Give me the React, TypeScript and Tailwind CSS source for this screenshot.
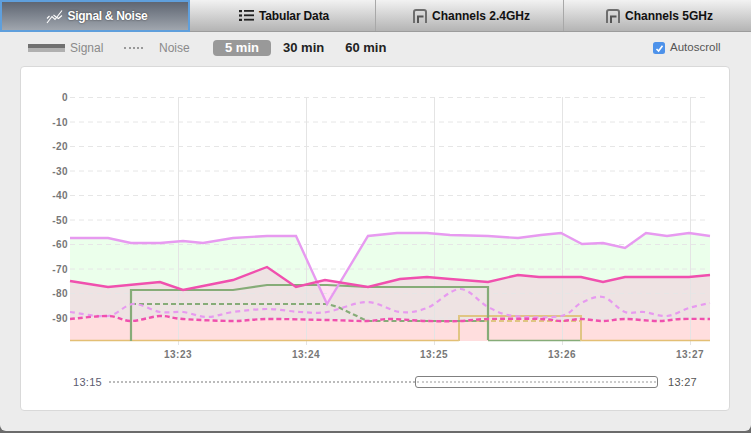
import React from "react";

type P = [number, number];
const poly = (p: P[]) => p.map((q, i) => `${i ? "L" : "M"}${q[0]} ${q[1]}`).join(" ");
const smooth = (p: P[]) => {
  let d = `M${p[0][0]} ${p[0][1]}`;
  for (let i = 0; i < p.length - 1; i++) {
    const a = p[Math.max(i - 1, 0)], b = p[i], c = p[i + 1], e = p[Math.min(i + 2, p.length - 1)];
    d += ` C${b[0] + (c[0] - a[0]) / 6} ${b[1] + (c[1] - a[1]) / 6} ${c[0] - (e[0] - b[0]) / 6} ${c[1] - (e[1] - b[1]) / 6} ${c[0]} ${c[1]}`;
  }
  return d;
};

const purple: P[] = [[70,238],[108,238],[131,243],[160,243],[183,241],[203,243],[233,238],[267,236],[296,236],[327,304],[368,236],[397,233],[427,233],[450,235],[488,236],[518,238],[541,235],[561,233],[582,244],[603,243],[625,248],[646,233],[667,236],[689,233],[710,236]];
const pink: P[] = [[70,281],[108,287],[160,282],[183,290],[233,280],[267,267],[296,287],[325,280],[368,287],[400,279],[427,277],[450,279],[488,282],[518,275],[539,277],[581,277],[603,282],[625,277],[689,277],[710,275]];
const noise: P[] = [[70,319],[108,316],[131,321],[160,316],[183,319],[233,321],[267,319],[327,320],[367,321],[390,319],[427,321],[460,321],[487,319],[541,319],[561,321],[581,319],[603,321],[625,319],[658,321],[681,319],[710,319]];
const purpleNoise: P[] = [[70,312],[108,316],[133,304],[160,312],[183,312],[207,317],[233,312],[267,309],[300,312],[327,312],[367,302],[400,312],[427,308],[460,289],[488,307],[514,316],[561,316],[581,303],[603,297],[625,312],[644,312],[667,316],[689,308],[710,303]];
const greenNoise: P[] = [[131,304],[327,304],[338,307],[363,319],[368,321],[487,321]];
const greenLine: P[] = [[131,341],[131,290],[233,290],[267,285],[327,285],[368,287],[488,287],[488,340]];
const ys = [0, 1, 2, 3, 4, 5, 6, 7, 8, 9];
const times: [number, string][] = [[179, "13:23"], [307, "13:24"], [435, "13:25"], [563, "13:26"], [691, "13:27"]];

function ChannelIcon() {
  return (
    <svg width="14" height="14" viewBox="0 0 14 14" fill="none">
      <path d="M1 14V3a2 2 0 0 1 2-2h8a2 2 0 0 1 2 2V14" stroke="#6e6e6e" strokeWidth="2" />
      <path d="M5 14V7.5H10.5" stroke="#555" strokeWidth="2" />
    </svg>
  );
}

function Tab({ children, last, className }: { children: React.ReactNode; last?: boolean; className?: string }) {
  return (
    <div className={`flex h-full flex-1 items-center justify-center gap-[5px] text-[12px] font-bold text-[#111] ${last ? "" : "border-r border-[#a8a8a8]"} ${className ?? ""}`}>
      {children}
    </div>
  );
}

export default function App() {
  return (
    <div className="h-[433px] w-[751px] overflow-hidden bg-[#6b6b6b] font-['Liberation_Sans',Arial,sans-serif]">
      <div className="flex h-[431px] flex-col rounded-b-[6px] bg-[#ececec]">
        <div className="flex h-[32px] w-full border-b border-[#9c9c9c] bg-gradient-to-b from-[#f2f2f2] to-[#b4b4b4]">
          <div className="flex h-[32px] w-[190px] shrink-0 items-center justify-center gap-[5px] border-2 border-[#5f9fdc] bg-gradient-to-b from-[#5f6672] to-[#a0a6ae] pl-[3px] text-[12px] font-bold tracking-[-0.3px] text-white [text-shadow:0_0_2px_#333]">
            <svg width="17" height="15" viewBox="0 0 17 15" fill="none" stroke="#fff" strokeWidth="1.1">
              <path d="M1 14L6 7.5L9 10.5L16 1.5" />
              <path d="M1 9.5L3.5 7M7.5 6L10 8L12.5 9.5L16 6.5" />
            </svg>
            <span>Signal &amp; Noise</span>
          </div>
          <div className="w-[186px]">
            <Tab className="pl-[3px] tracking-[-0.15px]">
              <svg width="15" height="11" viewBox="0 0 15 11" fill="#222">
                <rect x="0" y="0" width="3" height="2.2" />
                <rect x="0" y="4.4" width="3" height="2.2" />
                <rect x="0" y="8.8" width="3" height="2.2" />
                <rect x="5" y="0" width="10" height="1.8" />
                <rect x="5" y="4.4" width="10" height="1.8" />
                <rect x="5" y="8.8" width="10" height="1.8" />
              </svg>
              <span>Tabular Data</span>
            </Tab>
          </div>
          <div className="w-[188px]">
            <Tab className="pl-[4px]">
              <ChannelIcon />
              <span>Channels 2.4GHz</span>
            </Tab>
          </div>
          <div className="flex-1">
            <Tab last className="pl-[4px]">
              <ChannelIcon />
              <span>Channels 5GHz</span>
            </Tab>
          </div>
        </div>

        <div className="flex h-[32px] items-center pl-[28px] pr-[29px]">
          <div className="h-[8px] w-[37px] bg-gradient-to-b from-[#707070] from-50% to-[#b0b0b0] to-50%" />
          <span className="ml-[5px] w-[31px] text-[12px] text-[#8a8a8a]">Signal</span>
          <div className="ml-[23px] h-[1px] w-[19px] border-t-2 border-dotted border-[#999]" />
          <span className="ml-[16px] w-[30px] text-[12px] text-[#8a8a8a]">Noise</span>
          <div className="ml-[24px] flex h-[16px] w-[58px] items-center justify-center rounded-[4px] bg-[#999] text-[13px] font-bold text-white">5 min</div>
          <span className="ml-[12px] text-[13px] font-bold text-[#222]">30 min</span>
          <span className="ml-[21px] text-[13px] font-bold text-[#222]">60 min</span>
          <div className="ml-auto flex items-center gap-[5px]">
            <div className="flex h-[12px] w-[12px] items-center justify-center rounded-[2.5px] bg-[#4d92ea]">
              <svg width="9" height="9" viewBox="0 0 9 9" fill="none" stroke="#fff" strokeWidth="1.6">
                <path d="M1.5 5L3.6 7L7.5 1.8" />
              </svg>
            </div>
            <span className="w-[52px] text-[11.5px] text-[#555]">Autoscroll</span>
          </div>
        </div>

        <div className="ml-[20px] mt-[2px] h-[345px] w-[710px] rounded-[4px] border border-[#d9d9d9] bg-white">
          <svg width="708" height="298" viewBox="21 67 708 298" className="block" fontFamily="'Liberation Sans', Arial, sans-serif">
            <path d={`${poly(purple)} ${poly([...noise].reverse()).replace("M", "L")} Z`} fill="rgba(0,255,0,0.08)" />
            <path d={`${poly(pink)} ${poly([...noise].reverse()).replace("M", "L")} Z`} fill="rgba(248,144,204,0.25)" />
            <path d={`${poly(noise)} L710 341 L70 341 Z`} fill="#ffdede" />
            {ys.map((i) => (
              <g key={i}>
                <line x1="70" x2="705" y1={97.5 + i * 24.5} y2={97.5 + i * 24.5} stroke="#e6e6e6" strokeDasharray="5 4" />
                <text x="68" y={101 + i * 24.5} textAnchor="end" fontSize="10" fontWeight="700" letterSpacing="0.4" fill="#777">
                  {i === 0 ? "0" : `-${i * 10}`}
                </text>
              </g>
            ))}
            {times.map(([x, t]) => (
              <g key={t}>
                <line x1={x - 0.5} x2={x - 0.5} y1="97" y2="345" stroke="#e4e4e4" />
                <text x={x - 1} y="358" textAnchor="middle" fontSize="10" fontWeight="700" letterSpacing="0.5" fill="#777">{t}</text>
              </g>
            ))}
            <path d="M70 340.5H459M581 340.5H710" stroke="#e3bf74" strokeWidth="1.5" fill="none" />
            <path d="M488 340.5H581" stroke="#86ac78" strokeWidth="1.5" fill="none" />
            <path d="M459 341V316H581V341" stroke="#e0c583" strokeWidth="2" fill="none" />
            <path d="M459 321H581" stroke="#e0c583" strokeWidth="2" strokeDasharray="5 3" fill="none" />
            <path d={poly(greenLine)} stroke="#86ac78" strokeWidth="2.2" fill="none" />
            <path d={poly(greenNoise)} stroke="#86ac78" strokeWidth="2.2" strokeDasharray="5 3" fill="none" />
            <path d={smooth(purpleNoise)} stroke="#e79af0" strokeWidth="2.2" strokeDasharray="5 4" fill="none" />
            <path d={poly(purple)} stroke="#e79af0" strokeWidth="2.4" fill="none" />
            <path d={smooth(noise)} stroke="#f050ae" strokeWidth="2.4" strokeDasharray="5 3" fill="none" />
            <path d={poly(pink)} stroke="#f050ae" strokeWidth="2.4" fill="none" />
          </svg>
          <div className="mt-[11px] flex h-[12px] items-center pl-[52px]">
            <span className="w-[36px] text-[11px] tracking-[0.3px] text-[#5c5c70]">13:15</span>
            <div className="w-[306px] border-t-2 border-dotted border-[#bbb]" />
            <div className="flex h-[12px] w-[243px] items-center rounded-[3px] border border-[#808080] px-[1px]">
              <div className="w-full border-t-2 border-dotted border-[#ccc]" />
            </div>
            <span className="ml-[10px] text-[11px] tracking-[0.3px] text-[#555]">13:27</span>
          </div>
        </div>
      </div>
    </div>
  );
}
